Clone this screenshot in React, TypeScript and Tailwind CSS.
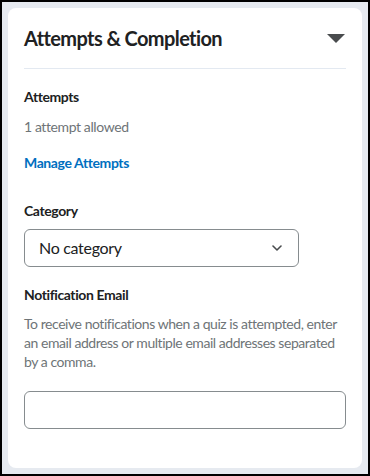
export default function App() {
  return (
    <div className="h-[476px] w-[370px] border-2 border-black bg-[#e6eaf0] p-[6px] font-['Lato','Liberation_Sans',sans-serif] text-[#202122]">
      <div className="h-full rounded-[8px] bg-white px-4 pt-[18px]">
        <div className="flex items-center justify-between border-b border-[#e3e9f1] pb-[18px]">
          <h2 className="text-[20px] leading-[24px] font-bold tracking-[-0.6px] text-[#202122]">Attempts &amp; Completion</h2>
          <svg width="18" height="9" viewBox="0 0 18 9" className="mr-[1px]">
            <path d="M0 0h18L9 9z" fill="#494c4e" />
          </svg>
        </div>

        <div className="pt-[18px] tracking-[-0.4px]">
          <p className="text-[14px] leading-[20px] font-bold">Attempts</p>
          <p className="mt-[10px] text-[14px] leading-[20px] text-[#6e7477]">1 attempt allowed</p>
          <button className="mt-[16px] text-[14px] leading-[20px] font-bold tracking-[-0.4px] text-[#006fbf]">Manage Attempts</button>
        </div>

        <div className="mt-[27px]">
          <p className="text-[14px] leading-[20px] font-bold tracking-[-0.4px]">Category</p>
          <div className="mt-[8px] flex h-[38px] w-[275px] items-center justify-between rounded-[6px] border border-[#868c8f] pl-[14px] pr-[16px]">
            <span className="text-[16px] tracking-[-0.3px] text-[#202122]">No category</span>
            <svg width="10" height="6" viewBox="0 0 10 6">
              <path d="M1 1l4 4 4-4" fill="none" stroke="#494c4e" strokeWidth="1.6" strokeLinecap="round" strokeLinejoin="round" />
            </svg>
          </div>
        </div>

        <div className="mt-[18px] tracking-[-0.4px]">
          <p className="text-[14px] leading-[20px] font-bold">Notification Email</p>
          <p className="mt-[9px] text-[14px] leading-[19px] tracking-[-0.45px] text-[#6e7477]">
            To receive notifications when a quiz is attempted, enter an email address or multiple email addresses separated by a comma.
          </p>
          <input className="mt-[20px] h-[38px] w-full rounded-[6px] border border-[#868c8f] px-3 outline-none" />
        </div>
      </div>
    </div>
  );
}
